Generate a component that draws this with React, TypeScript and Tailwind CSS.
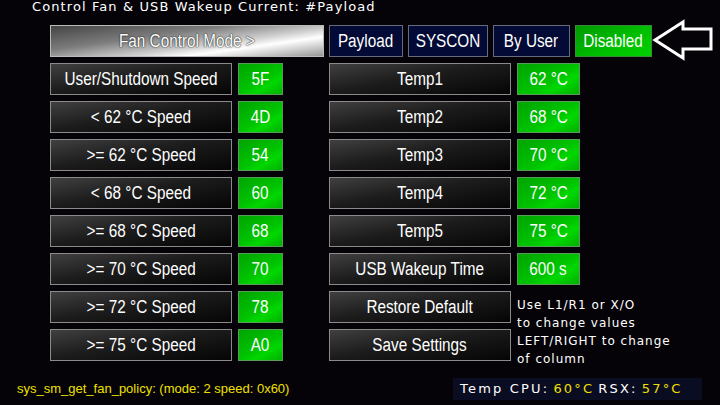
import React from 'react';

const speeds = [
    ['User/Shutdown Speed', '5F'],
    ['< 62 °C Speed', '4D'],
    ['>= 62 °C Speed', '54'],
    ['< 68 °C Speed', '60'],
    ['>= 68 °C Speed', '68'],
    ['>= 70 °C Speed', '70'],
    ['>= 72 °C Speed', '78'],
    ['>= 75 °C Speed', 'A0'],
];

const temps = [
    ['Temp1', '62 °C'],
    ['Temp2', '68 °C'],
    ['Temp3', '70 °C'],
    ['Temp4', '72 °C'],
    ['Temp5', '75 °C'],
    ['USB Wakeup Time', '600 s'],
];

const wide = "font-['DejaVu_Sans',Verdana,sans-serif]";

// condensed label: Liberation Sans squeezed horizontally
const Txt: React.FC<{ children: React.ReactNode }> = ({ children }) => (
    <span className="inline-block whitespace-nowrap scale-x-[0.85] font-['Liberation_Sans',Arial,sans-serif] text-[18px] leading-none">
        {children}
    </span>
);

const Dark: React.FC<{ label: string; w: string }> = ({ label, w }) => (
    <div className={`${w} h-[32px] shrink-0 flex items-center justify-center border border-[#8a8a8a] bg-[linear-gradient(170deg,#404040_0%,#1c1c1c_45%,#050505_100%)] text-white`}>
        <Txt>{label}</Txt>
    </div>
);

const Green: React.FC<{ value: string; w: string }> = ({ value, w }) => (
    <div className={`${w} h-[32px] shrink-0 flex items-center justify-center border border-[#5a9a5a] bg-[linear-gradient(150deg,#00a400_0%,#00c400_55%,#00d800_70%,#00b000_100%)] text-white`}>
        <Txt>{value}</Txt>
    </div>
);

const Mode: React.FC<{ label: string; w: string; on?: boolean }> = ({ label, w, on }) => (
    <div className={`${w} h-[32px] shrink-0 flex items-center justify-center border ${on ? 'border-[#3a8a3a] bg-[linear-gradient(150deg,#009a00_0%,#00c000_60%,#00d000_100%)]' : 'border-[#666a7a] bg-[#030a35]'} text-white`}>
        <Txt>{label}</Txt>
    </div>
);

const App: React.FC = () => {
    return (
        <div className="w-[720px] h-[405px] bg-[#050308] overflow-hidden">
            <div className={`pl-[32px] h-[14px] leading-[14px] text-white text-[13px] tracking-[1.1px] ${wide}`}>
                Control Fan &amp; USB Wakeup Current: #Payload
            </div>

            <div className="flex items-center h-[32px] gap-[5px] pl-[50px] mt-[11px]">
                <div className="w-[274px] h-[32px] shrink-0 flex items-center justify-center border border-[#bbbbbb] bg-[linear-gradient(172deg,#444_0%,#7c7c7c_35%,#cfcfcf_60%,#ffffff_72%,#959595_100%)] text-white [text-shadow:0_0_2px_#222,0_0_1px_#222]">
                    <Txt>Fan Control Mode &gt;</Txt>
                </div>
                <Mode label="Payload" w="w-[74px]" />
                <Mode label="SYSCON" w="w-[80px]" />
                <Mode label="By User" w="w-[77px]" />
                <Mode label="Disabled" w="w-[77px]" on />
                <svg width="62" height="32" viewBox="0 0 62 32" overflow="visible" className="ml-[-3px] overflow-visible">
                    <polygon points="1,15 29,-3 29,4 57,4 57,24 29,24 29,33" fill="none" stroke="white" strokeWidth="3" />
                </svg>
            </div>

            <div className="flex pl-[50px] mt-[6px]">
                <div className="flex flex-col gap-[6px]">
                    {speeds.map(([l, v]) => (
                        <div key={l} className="flex gap-[6px]">
                            <Dark label={l} w="w-[182px]" />
                            <Green value={v} w="w-[45px]" />
                        </div>
                    ))}
                </div>
                <div className="flex flex-col gap-[6px] ml-[46px]">
                    {temps.map(([l, v]) => (
                        <div key={l} className="flex gap-[6px]">
                            <Dark label={l} w="w-[182px]" />
                            <Green value={v} w="w-[63px]" />
                        </div>
                    ))}
                    <div className="flex gap-[6px] h-[70px]">
                        <div className="flex flex-col gap-[6px]">
                            <Dark label="Restore Default" w="w-[182px]" />
                            <Dark label="Save Settings" w="w-[182px]" />
                        </div>
                        <div className={`text-white text-[12px] leading-[18px] tracking-[1px] pt-[5px] ${wide}`}>
                            <div>Use L1/R1 or X/O</div>
                            <div>to change values</div>
                            <div>LEFT/RIGHT to change</div>
                            <div>of column</div>
                        </div>
                    </div>
                </div>
            </div>

            <div className="flex items-center mt-[17px]">
                <div className="pl-[17px] w-[453px] text-[#f0e000] text-[13px] font-['Liberation_Sans',Arial,sans-serif]">
                    sys_sm_get_fan_policy: (mode: 2 speed: 0x60)
                </div>
                <div className={`w-[249px] h-[22px] bg-[#0a0c22] flex items-center pl-[7px] text-[13px] tracking-[2.2px] text-white ${wide}`}>
                    Temp CPU: <span className="text-[#f0e000] ml-[4px]">60°C</span><span className="ml-[4px]">RSX:</span><span className="text-[#f0e000] ml-[4px]">57°C</span>
                </div>
            </div>
        </div>
    );
};

export default App;
